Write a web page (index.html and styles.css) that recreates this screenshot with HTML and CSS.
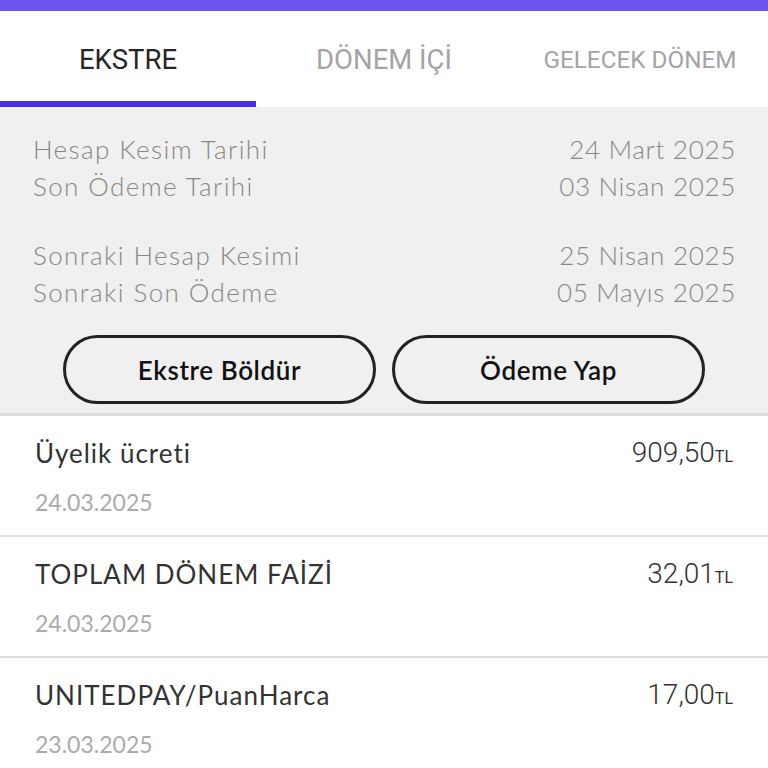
FILE: index.html
```html
<!DOCTYPE html>
<html lang="tr">
<head>
    <meta charset="UTF-8">
    <meta name="viewport" content="width=device-width, initial-scale=1.0">
    <title>Ekstre</title>
    <link rel="stylesheet" href="styles.css">
</head>
<body>
    <div class="topbar"></div>

    <div class="tabs">
        <div class="tab active">EKSTRE</div>
        <div class="tab">DÖNEM İÇİ</div>
        <div class="tab small">GELECEK DÖNEM</div>
    </div>

    <div class="summary">
        <div class="group">
            <div class="line"><span>Hesap Kesim Tarihi</span><span class="val">24 Mart 2025</span></div>
            <div class="line"><span>Son Ödeme Tarihi</span><span class="val">03 Nisan 2025</span></div>
        </div>
        <div class="group">
            <div class="line"><span>Sonraki Hesap Kesimi</span><span class="val">25 Nisan 2025</span></div>
            <div class="line"><span>Sonraki Son Ödeme</span><span class="val">05 Mayıs 2025</span></div>
        </div>
        <div class="actions">
            <button class="pill">Ekstre Böldür</button>
            <button class="pill">Ödeme Yap</button>
        </div>
    </div>

    <div class="list">
        <div class="item">
            <div class="info">
                <div class="title">Üyelik ücreti</div>
                <div class="date">24.03.2025</div>
            </div>
            <div class="amount">909,50<small>TL</small></div>
        </div>
        <div class="item">
            <div class="info">
                <div class="title">TOPLAM DÖNEM FAİZİ</div>
                <div class="date">24.03.2025</div>
            </div>
            <div class="amount">32,01<small>TL</small></div>
        </div>
        <div class="item">
            <div class="info">
                <div class="title">UNITEDPAY/PuanHarca</div>
                <div class="date">23.03.2025</div>
            </div>
            <div class="amount">17,00<small>TL</small></div>
        </div>
    </div>
</body>
</html>
```

FILE: styles.css
```css
body {
    margin: 0;
    width: 768px;
    height: 768px;
    overflow: hidden;
    background-color: #fff;
    font-family: Lato, "Noto Sans", sans-serif;
}
.topbar {
    height: 11px;
    background-color: #6c55ee;
}
.tabs {
    display: grid;
    grid-template-columns: repeat(3, 1fr);
    height: 96px;
}
.tab {
    display: flex;
    align-items: center;
    justify-content: center;
    padding-top: 6px;
    padding-bottom: 6px;
    font-family: Roboto, sans-serif;
    font-size: 27.5px;
    color: #a4a4a4;
}
.tab.small {
    font-size: 24.3px;
}
.tab.active {
    color: #262626;
    padding-bottom: 0;
    border-bottom: 6px solid #4b2ced;
}
.summary {
    background-color: #f0f0f0;
    padding: 24px 32px 9px 33px;
    border-bottom: 3px solid #dcdcdc;
}
.group {
    margin-bottom: 32px;
}
.group + .group {
    margin-bottom: 24px;
}
.line {
    display: flex;
    justify-content: space-between;
    font-size: 26px;
    line-height: 37px;
    letter-spacing: 1.4px;
    color: #878787;
    font-weight: 300;
}
.line .val {
    letter-spacing: 0.7px;
}
.actions {
    display: grid;
    grid-template-columns: 1fr 1fr;
    gap: 16px;
    padding: 0 31px 0 30px;
}
.pill {
    height: 69px;
    border: 3px solid #222;
    border-radius: 35px;
    background-color: #f0f0f0;
    font-family: Lato, sans-serif;
    font-size: 26px;
    font-weight: 600;
    letter-spacing: 0.6px;
    color: #111;
}
.item {
    display: flex;
    justify-content: space-between;
    padding: 19px 35px 16px 35px;
    border-bottom: 2px solid #dedede;
}
.title {
    font-size: 26px;
    line-height: 36px;
    letter-spacing: 1px;
    color: #333;
}
.date {
    margin-top: 14px;
    font-size: 23px;
    line-height: 34px;
    color: #ababab;
}
.amount {
    font-family: Roboto, sans-serif;
    font-size: 28px;
    font-weight: 300;
    line-height: 36px;
    color: #333;
}
.amount small {
    font-size: 16px;
    font-weight: 400;
}
```
